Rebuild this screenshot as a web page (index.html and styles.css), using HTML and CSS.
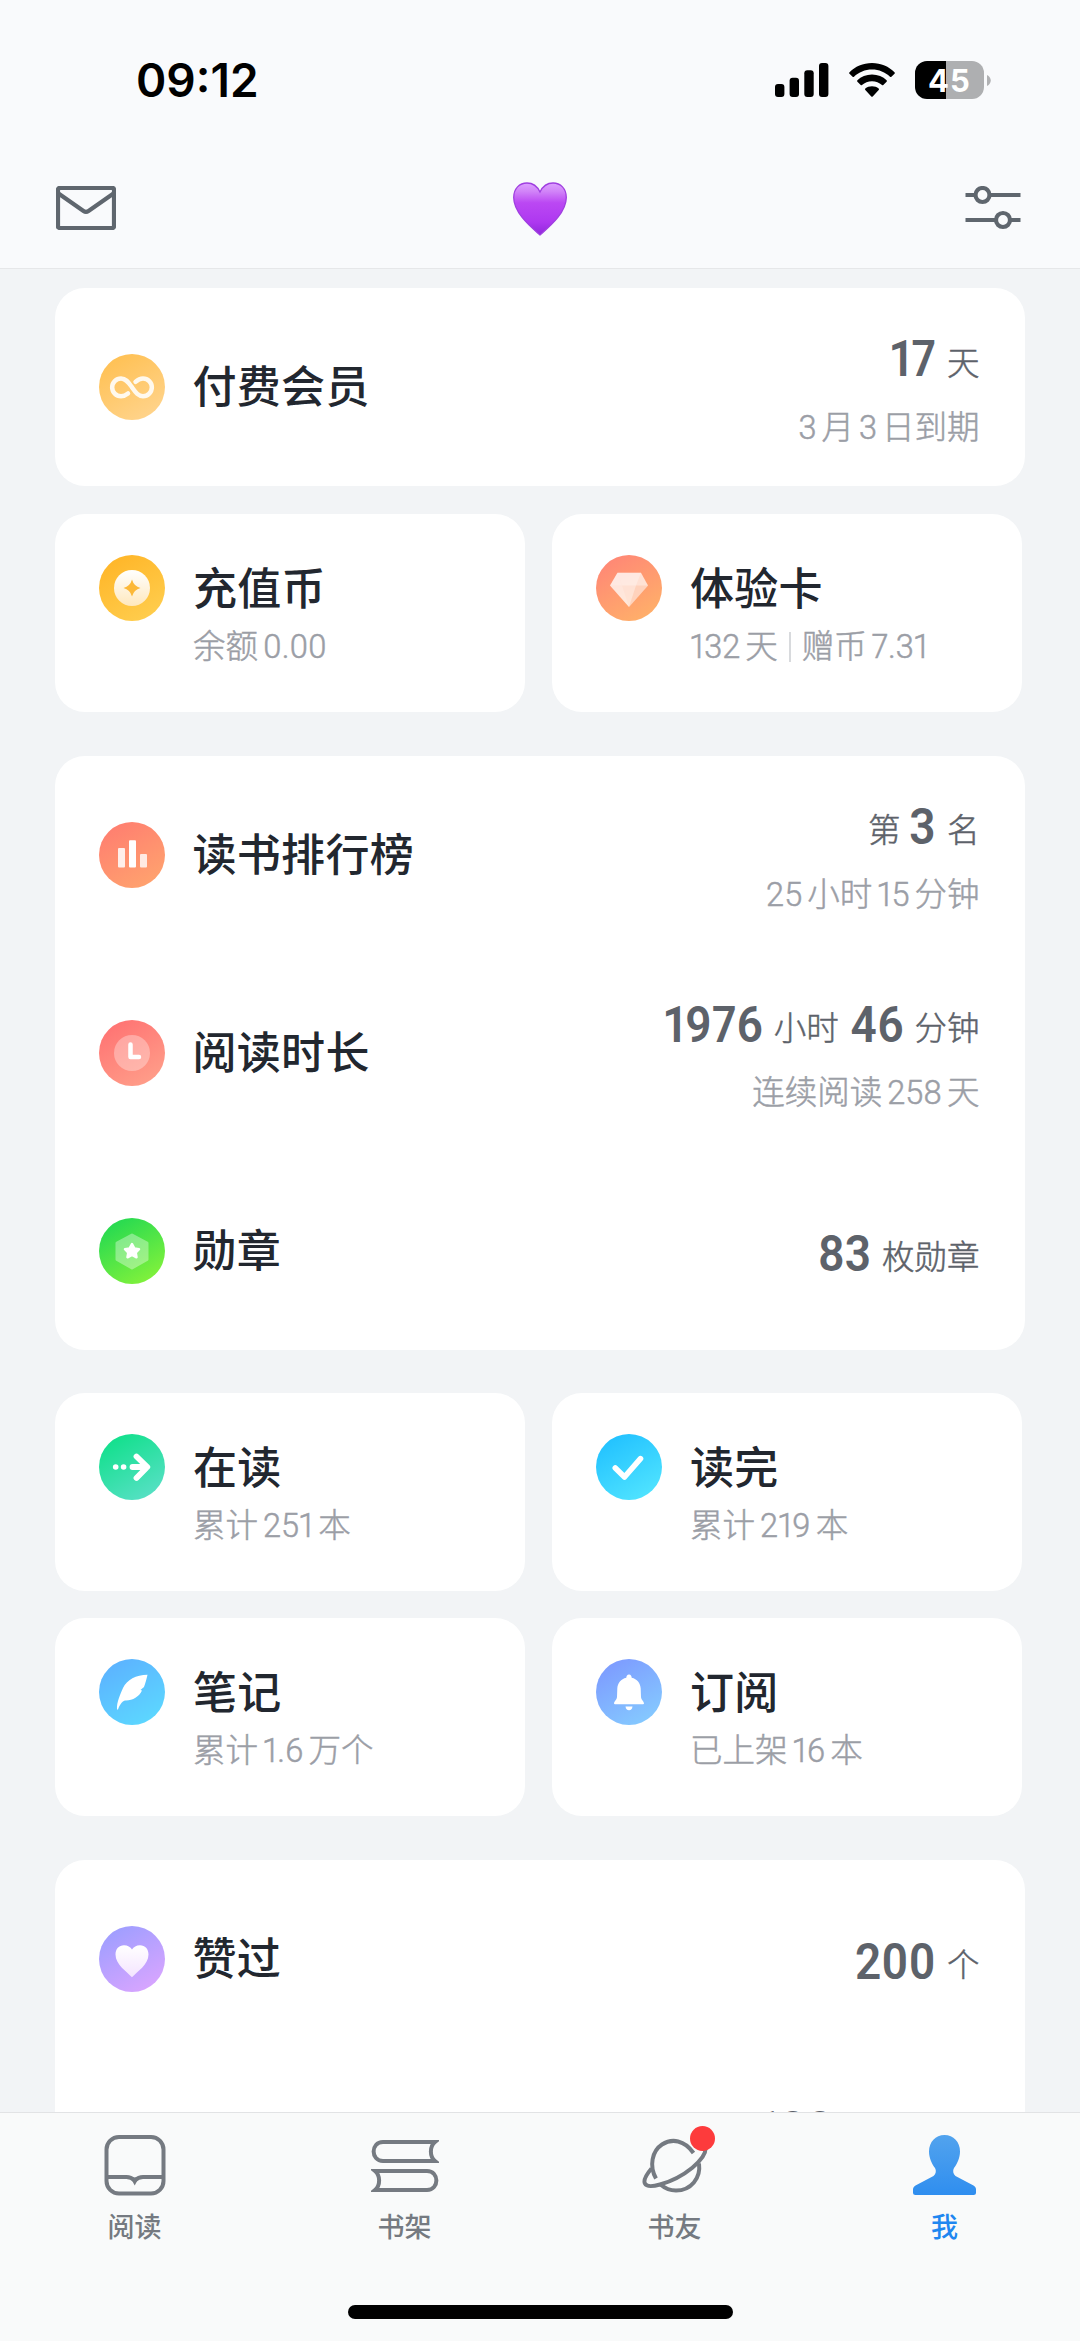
FILE: index.html
```html
<!DOCTYPE html>
<html lang="zh-CN">
<head>
<meta charset="utf-8">
<title>我</title>
<link rel="stylesheet" href="styles.css">
</head>
<body>
<div class="app">
  <header class="header">
    <div class="status">
      <span class="clock">09:12</span>
      <div class="status-icons">
        <svg class="signal" width="54" height="34" viewBox="0 0 54 34"><rect x="0" y="21" width="9.4" height="13" rx="3"/><rect x="14.6" y="14.7" width="9.4" height="19.3" rx="3"/><rect x="29.3" y="7.3" width="9.4" height="26.7" rx="3"/><rect x="44" y="0" width="9.4" height="34" rx="3"/></svg>
        <svg class="wifi" width="46" height="34" viewBox="0 0 46 34"><path d="M23 0C32 0 40 3.6 45.5 9.2Q46.2 10 45.5 10.8L42.4 13.8Q41.7 14.4 41 13.8C36.2 9.2 30 6.6 23 6.6S9.800 9.200 5 13.800Q4.300 14.400 3.600 13.800L.5 10.800Q-.2 10 .5 9.200C6 3.600 14 0 23 0Z"/><path d="M23 11.600C28.800 11.600 33.900 13.800 37.600 17.300Q38.300 18 37.600 18.700L34.300 21.900Q33.700 22.500 33 21.900C30.300 19.600 26.900 18.200 23 18.200S15.700 19.600 13 21.900Q12.300 22.500 11.700 21.900L8.400 18.700Q7.700 18 8.400 17.300C12.100 13.800 17.200 11.600 23 11.600Z"/><path d="M23 23.200C25.600 23.200 27.900 24.100 29.700 25.500Q30.400 26.200 29.700 26.900L23.700 33.400Q23 34 22.300 33.400L16.300 26.900Q15.600 26.200 16.300 25.500C18.100 24.100 20.400 23.200 23 23.200Z"/></svg>
        <div class="battery"><span class="battery-level">45</span><svg width="4" height="11" viewBox="0 0 4 11"><path d="M0 0C5 2.500 5 8.500 0 11Z"/></svg></div>
      </div>
    </div>
    <nav class="navbar">
      <svg width="60" height="44" viewBox="0 0 60 44" class="line-icon"><rect x="2" y="2" width="56" height="40" rx="1.500"/><path d="M2.500 7.500L27.500 25Q30 26.700 32.500 25L57.500 7.500"/></svg>
      <svg class="love" width="54" height="54" viewBox="0 0 54 54">
        <defs>
          <linearGradient id="love" x1="0" y1="0" x2="0" y2="1"><stop offset="0" stop-color="#dda0ff"/><stop offset=".16" stop-color="#d184f8"/><stop offset=".38" stop-color="#bb48f3"/><stop offset=".75" stop-color="#ae38f0"/><stop offset="1" stop-color="#9128dc"/></linearGradient>
        </defs>
        <path d="M27 53C18 45 .7 31 .7 15.500C.7 6.500 6.500 1 14 1C20 1 24.500 4.800 27 10C29.500 4.800 34 1 40 1C47.500 1 53.300 6.500 53.300 15.500C53.300 31 36 45 27 53Z" fill="url(#love)" stroke="#a03fe0" stroke-width="1.300"/>
      </svg>
      <svg width="56" height="44" viewBox="0 0 56 44" class="line-icon"><path d="M.5 9H10M25 9H55.500M.5 34H30.500M45.500 34H55.500"/><circle cx="17.500" cy="9" r="7"/><circle cx="38" cy="34" r="7"/></svg>
    </nav>
  </header>

  <main class="content">
    <section class="card">
      <div class="row">
        <span class="badge member"><svg viewBox="0 0 66 66"><path class="stroke" stroke-width="4.500" opacity=".88" d="M29 39.500C26.500 41.500 24.500 42.200 22 42.200A8.800 8.800 0 0 1 22 24.500C27 24.500 29.500 28.500 33 33.300C36.500 38.200 39 42.200 44 42.200A8.800 8.800 0 0 0 44 24.500C41 24.500 39 25.500 36.500 27.800"/></svg></span>
        <h2 class="title">付费会员</h2>
        <div class="value"><p class="main"><b>17</b>天</p><p class="sub">3 月 3 日到期</p></div>
      </div>
    </section>

    <section class="pair">
      <div class="card half">
        <span class="badge coin"><svg viewBox="0 0 66 66"><defs><linearGradient id="coin" x1="0" y1="0" x2="0" y2="1"><stop offset="0" stop-color="#fff"/><stop offset="1" stop-color="#ffe8bd"/></linearGradient></defs><circle cx="33" cy="33" r="18" fill="url(#coin)"/><path fill="#fcb838" d="M33 24.500Q34.800 31.200 41.500 33Q34.800 34.800 33 41.500Q31.200 34.800 24.500 33Q31.200 31.200 33 24.500Z"/></svg></span>
        <div><h2 class="title">充值币</h2><p class="sub">余额 0.00</p></div>
      </div>
      <div class="card half">
        <span class="badge gem"><svg viewBox="0 0 66 66"><g fill="#fff"><path opacity=".7" d="M21.500 17.700H45L52 30.500L33 52L14 30.500Z"/><path opacity=".3" d="M21.500 17.700H45L40 30.500H26Z"/><path opacity=".3" d="M21.500 17.700L26 30.500H14Z"/><path opacity=".18" d="M14 30.500H26L33 52Z"/></g><path fill="#ffab84" opacity=".3" d="M40 30.500H52L33 52Z"/></svg></span>
        <div><h2 class="title">体验卡</h2><p class="sub">132 天<i class="bar"></i>赠币 7.31</p></div>
      </div>
    </section>

    <section class="card spaced">
      <div class="row">
        <span class="badge rank"><svg viewBox="0 0 66 66" fill="#fff"><rect x="19" y="26" width="7" height="19.500" rx="1" opacity=".85"/><rect x="30" y="18.300" width="7" height="27.200" rx="1"/><rect x="41" y="32" width="7" height="13.500" rx="1" opacity=".8"/></svg></span>
        <h2 class="title">读书排行榜</h2>
        <div class="value"><p class="main">第<b>3</b>名</p><p class="sub">25 小时 15 分钟</p></div>
      </div>
      <div class="row">
        <span class="badge time"><svg viewBox="0 0 66 66"><circle cx="33" cy="33" r="18" fill="#fff" opacity=".32"/><path class="stroke" stroke-width="4.500" d="M31.500 24.500V37H40"/></svg></span>
        <h2 class="title">阅读时长</h2>
        <div class="value"><p class="main"><b>1976</b>小时<b>46</b>分钟</p><p class="sub">连续阅读 258 天</p></div>
      </div>
      <div class="row">
        <span class="badge medal"><svg viewBox="0 0 66 66" fill="#fff"><path opacity=".36" stroke="#fff" stroke-width="3" stroke-linejoin="round" d="M33 17L48 25V41.500L33 50L18 41.500V25Z"/><path stroke="#fff" stroke-width="2.500" stroke-linejoin="round" d="M33 26L35.300 30.400L40 31.200L36.700 34.500L37.500 39.300L33 37L28.500 39.300L29.300 34.500L26 31.200L30.700 30.400Z"/></svg></span>
        <h2 class="title">勋章</h2>
        <div class="value single"><p class="main"><b>83</b>枚勋章</p></div>
      </div>
    </section>

    <section class="pair spaced">
      <div class="card half">
        <span class="badge reading"><svg viewBox="0 0 66 66"><g fill="#fff"><circle cx="16.700" cy="33" r="2.800"/><circle cx="24.600" cy="33" r="2.800"/></g><path class="stroke" stroke-width="5.800" d="M33.500 33H48M37.500 22.500L48.300 33L37.500 44"/></svg></span>
        <div><h2 class="title">在读</h2><p class="sub">累计 251 本</p></div>
      </div>
      <div class="card half">
        <span class="badge done"><svg viewBox="0 0 66 66"><path class="stroke" stroke-width="5.600" d="M19.300 34L28.500 43L44.500 24.700"/></svg></span>
        <div><h2 class="title">读完</h2><p class="sub">累计 219 本</p></div>
      </div>
      <div class="card half">
        <span class="badge notes"><svg viewBox="0 0 66 66"><path fill="#fff" d="M48.500 15.700C37 16 28 20.500 24 29C21.500 35 17.500 43 18 50.500H19C20.500 46.500 22.500 42.500 26 41.500C33 42 40 38 43 31.500L41.500 31L45 28C46.500 24 47.500 20 48.500 15.700Z"/></svg></span>
        <div><h2 class="title">笔记</h2><p class="sub">累计 1.6 万个</p></div>
      </div>
      <div class="card half">
        <span class="badge subs"><svg viewBox="0 0 66 66" fill="#fff"><path d="M33 15.500C34.800 15.500 35.600 16.800 35.700 18.800C41 20 44.400 24 44.700 29.500L45 38C45.200 41 48 42.500 48 44.300C48 44.900 47.600 45.200 47 45.200H19C18.400 45.200 18 44.900 18 44.300C18 42.500 20.800 41 21 38L21.300 29.500C21.600 24 25 20 30.300 18.800C30.400 16.800 31.200 15.500 33 15.500Z"/><path d="M29.500 47.500H36.500Q36 51.300 33 51.300T29.500 47.500Z"/></svg></span>
        <div><h2 class="title">订阅</h2><p class="sub">已上架 16 本</p></div>
      </div>
    </section>

    <section class="card spaced">
      <div class="row">
        <span class="badge likes"><svg viewBox="0 0 66 66"><defs><linearGradient id="like" x1="0" y1="0" x2="0" y2="1"><stop offset="0" stop-color="#fff"/><stop offset="1" stop-color="#f4e4ff"/></linearGradient></defs><path fill="url(#like)" d="M33 51.200C28 46 16.500 38.500 16.500 28.500C16.500 23 20 19.300 25 19.300C28.500 19.300 31.500 21 33 23.500C34.500 21 37.500 19.300 41 19.300C46 19.300 49.500 23 49.500 28.500C49.500 38.500 38 46 33 51.200Z"/></svg></span>
        <h2 class="title">赞过</h2>
        <div class="value single"><p class="main"><b>200</b>个</p></div>
      </div>
      <div class="row next">
        <div class="value"><p class="main"><b>100</b></p></div>
      </div>
    </section>
  </main>

  <footer class="tabbar">
    <div class="tabs">
      <div class="tab">
        <svg width="66" height="62" viewBox="0 0 66 62" class="tab-icon"><rect x="4.500" y="3" width="57" height="56.500" rx="12.500"/><path d="M5 43H24.500Q29 43 32.700 46.500Q36.500 43 41 43H61"/><path class="solid" d="M28.500 43.500L32.700 51.500L37 43.500Z"/></svg>
        <span>阅读</span>
      </div>
      <div class="tab">
        <svg width="68" height="62" viewBox="0 0 68 62" class="tab-icon"><path d="M64 8H12C-.5 8 -.5 27 12 27H64C58.500 22.500 58.500 12.500 64 8Z"/><path d="M4 37H56C68.500 37 68.500 56 56 56H4C9.500 51.500 9.500 41.500 4 37Z"/></svg>
        <span>书架</span>
      </div>
      <div class="tab">
        <svg width="68" height="62" viewBox="0 0 68 62" class="tab-icon"><path d="M15 44.500C8 32 11 17 21 10.500C31 4 43.500 6 52.500 19"/><path d="M58 29.500C60 44 50 56.500 35 56.500C28 56.500 23.500 54 19.500 50.500"/><path d="M10.500 34.500C-1 48 1.500 55.500 19 50.500C42 44 67 25 64.500 12"/></svg>
        <i class="dot"></i>
        <span>书友</span>
      </div>
      <div class="tab active">
        <svg width="66" height="62" viewBox="0 0 66 62"><defs><linearGradient id="me" x1="0" y1="0" x2="0" y2="1"><stop offset="0" stop-color="#52a3ee"/><stop offset="1" stop-color="#2f8eef"/></linearGradient></defs><path fill="url(#me)" d="M32.500 1C41.500 1 48 8 48 17.500C48 24 45 30 42 34C40.500 36.500 41 40 43.500 42L61.500 51.500C63.500 52.700 64 54 64 55.500V58.500Q64 61 61.500 61H3.500Q1 61 1 58.500V55.500C1 54 1.500 52.700 3.500 51.500L21.500 42C24 40 24.500 36.500 23 34C20 30 17 24 17 17.500C17 8 23.500 1 32.500 1Z"/></svg>
        <span>我</span>
      </div>
    </div>
    <div class="home-indicator"></div>
  </footer>
</div>
</body>
</html>
```
FILE: styles.css
```css
* { box-sizing: border-box; margin: 0; padding: 0; }

body {
  background: #f2f4f6;
  font-family: Roboto, "Noto Sans CJK SC", sans-serif;
  color: #22272f;
}

svg { display: block; flex: none; }

.app {
  display: flex;
  flex-direction: column;
  width: 1080px;
  height: 2341px;
  overflow: hidden;
}

/* Header */
.header {
  flex: none;
  height: 269px;
  background: #f9fafc;
  border-bottom: 1.500px solid #e6e7e9;
}
.status {
  display: flex;
  justify-content: space-between;
  align-items: center;
  height: 160px;
  padding: 0 89px 0 136px;
}
.clock {
  font: 600 46px/56px Inter, sans-serif;
  color: #000;
}
.status-icons { display: flex; align-items: center; }
.wifi { margin: 0 20px; }
.battery { display: flex; align-items: center; gap: 3px; }
.battery svg { fill: #b0b1b3; }
.battery-level {
  width: 69px;
  height: 38px;
  border-radius: 12px;
  background: linear-gradient(90deg, #000 31.5px, #aeafb1 31.5px);
  color: #fff;
  font: 700 31px/39px Inter, sans-serif;
  letter-spacing: 1px;
  text-align: center;
}
.navbar {
  display: flex;
  justify-content: space-between;
  align-items: center;
  height: 96px;
  padding: 0 59px 0 56px;
}
.love { margin: 2px 2px 0 0; }
.line-icon { fill: none; stroke: #5f666e; stroke-width: 4.2; }

/* Content */
.content {
  flex: 1;
  min-height: 0;
  overflow: hidden;
  padding: 19px 55px 0;
}
.card { background: #fff; border-radius: 30px; }
.pair {
  display: grid;
  grid-template-columns: 470px 470px;
  gap: 27px;
  margin-top: 28px;
}
.content .spaced { margin-top: 43.5px; }
.row {
  display: flex;
  align-items: center;
  gap: 27.5px;
  height: 198px;
  padding: 0 45.5px 0 44px;
}
.half {
  display: flex;
  gap: 28px;
  height: 198px;
  padding: 41px 44px 0;
}
.title {
  padding-top: 2px;
  font-size: 44px;
  font-weight: 500;
  line-height: 66px;
  letter-spacing: .3px;
  white-space: nowrap;
}
.sub {
  font-size: 32.500px;
  font-weight: 300;
  line-height: 40px;
  word-spacing: -2.900px;
  font-variant-numeric: proportional-nums;
  -webkit-text-stroke: .5px;
  color: #9b9ea6;
  white-space: nowrap;
}
.half .sub { margin-top: 4px; }
.bar {
  display: inline-block;
  width: 2px;
  height: 30px;
  margin: 0 11px;
  background: #d8dadd;
  vertical-align: -4px;
}
.value { margin-left: auto; padding-top: 7px; text-align: right; }
.value.single { padding-top: 15px; }
.main {
  height: 60px;
  font-size: 32.500px;
  font-weight: 300;
  line-height: 60px;
  -webkit-text-stroke: .5px;
  color: #5d626a;
  white-space: nowrap;
}
.main b {
  display: inline-block;
  margin: 0 11px 0 7px;
  font-size: 50px;
  font-weight: 600;
  line-height: 50px;
  font-variant-numeric: proportional-nums;
  transform: scaleX(.92);
  transform-origin: right;
  vertical-align: -1.500px;
  -webkit-text-stroke: 0;
}
.value .sub { margin-top: 14px; }
.row.next { align-items: flex-start; padding: 40px 180px 0 0; }

/* Round icons */
.badge { flex: none; width: 66px; height: 66px; border-radius: 50%; }
.stroke { fill: none; stroke: #fff; stroke-linecap: round; stroke-linejoin: round; }
.member { background: linear-gradient(150deg, #ffbe4c, #ffd693); }
.coin { background: linear-gradient(150deg, #ffb324, #ffd052); }
.gem { background: linear-gradient(150deg, #ff8277, #ffb568); }
.rank { background: linear-gradient(150deg, #ff7a70, #ffa76e); }
.time { background: linear-gradient(150deg, #ff6e70, #ffa38c); }
.medal { background: linear-gradient(150deg, #18d654, #8ff538); }
.reading { background: linear-gradient(150deg, #08e084, #60e0cc); }
.done { background: linear-gradient(150deg, #1cbdff, #56e8ff); }
.notes { background: linear-gradient(150deg, #5caeff, #5cdcff); }
.subs { background: linear-gradient(150deg, #7c95ff, #86d0ff); }
.likes { background: linear-gradient(150deg, #979dff, #e0a6ff); }

/* Tab bar */
.tabbar {
  display: flex;
  flex-direction: column;
  justify-content: space-between;
  align-items: center;
  flex: none;
  height: 229px;
  padding: 21px 0 22px;
  background: #f9fafa;
  border-top: 1px solid #e2e3e5;
}
.tabs { display: flex; width: 100%; }
.tab {
  position: relative;
  display: flex;
  flex-direction: column;
  align-items: center;
  gap: 13px;
  flex: 1;
  color: #757a81;
  font-size: 27px;
  font-weight: 500;
  line-height: 38px;
}
.tab span { margin-right: 1px; }
.tab-icon { fill: none; stroke: #757a81; stroke-width: 4; }
.tab-icon .solid { fill: #757a81; stroke: none; }
.active { color: #1f87f0; }
.dot {
  position: absolute;
  top: -8px;
  left: 150px;
  width: 25px;
  height: 25px;
  border-radius: 50%;
  background: #fd3b3c;
}
.home-indicator { width: 385px; height: 14px; border-radius: 7px; background: #000; }
```
